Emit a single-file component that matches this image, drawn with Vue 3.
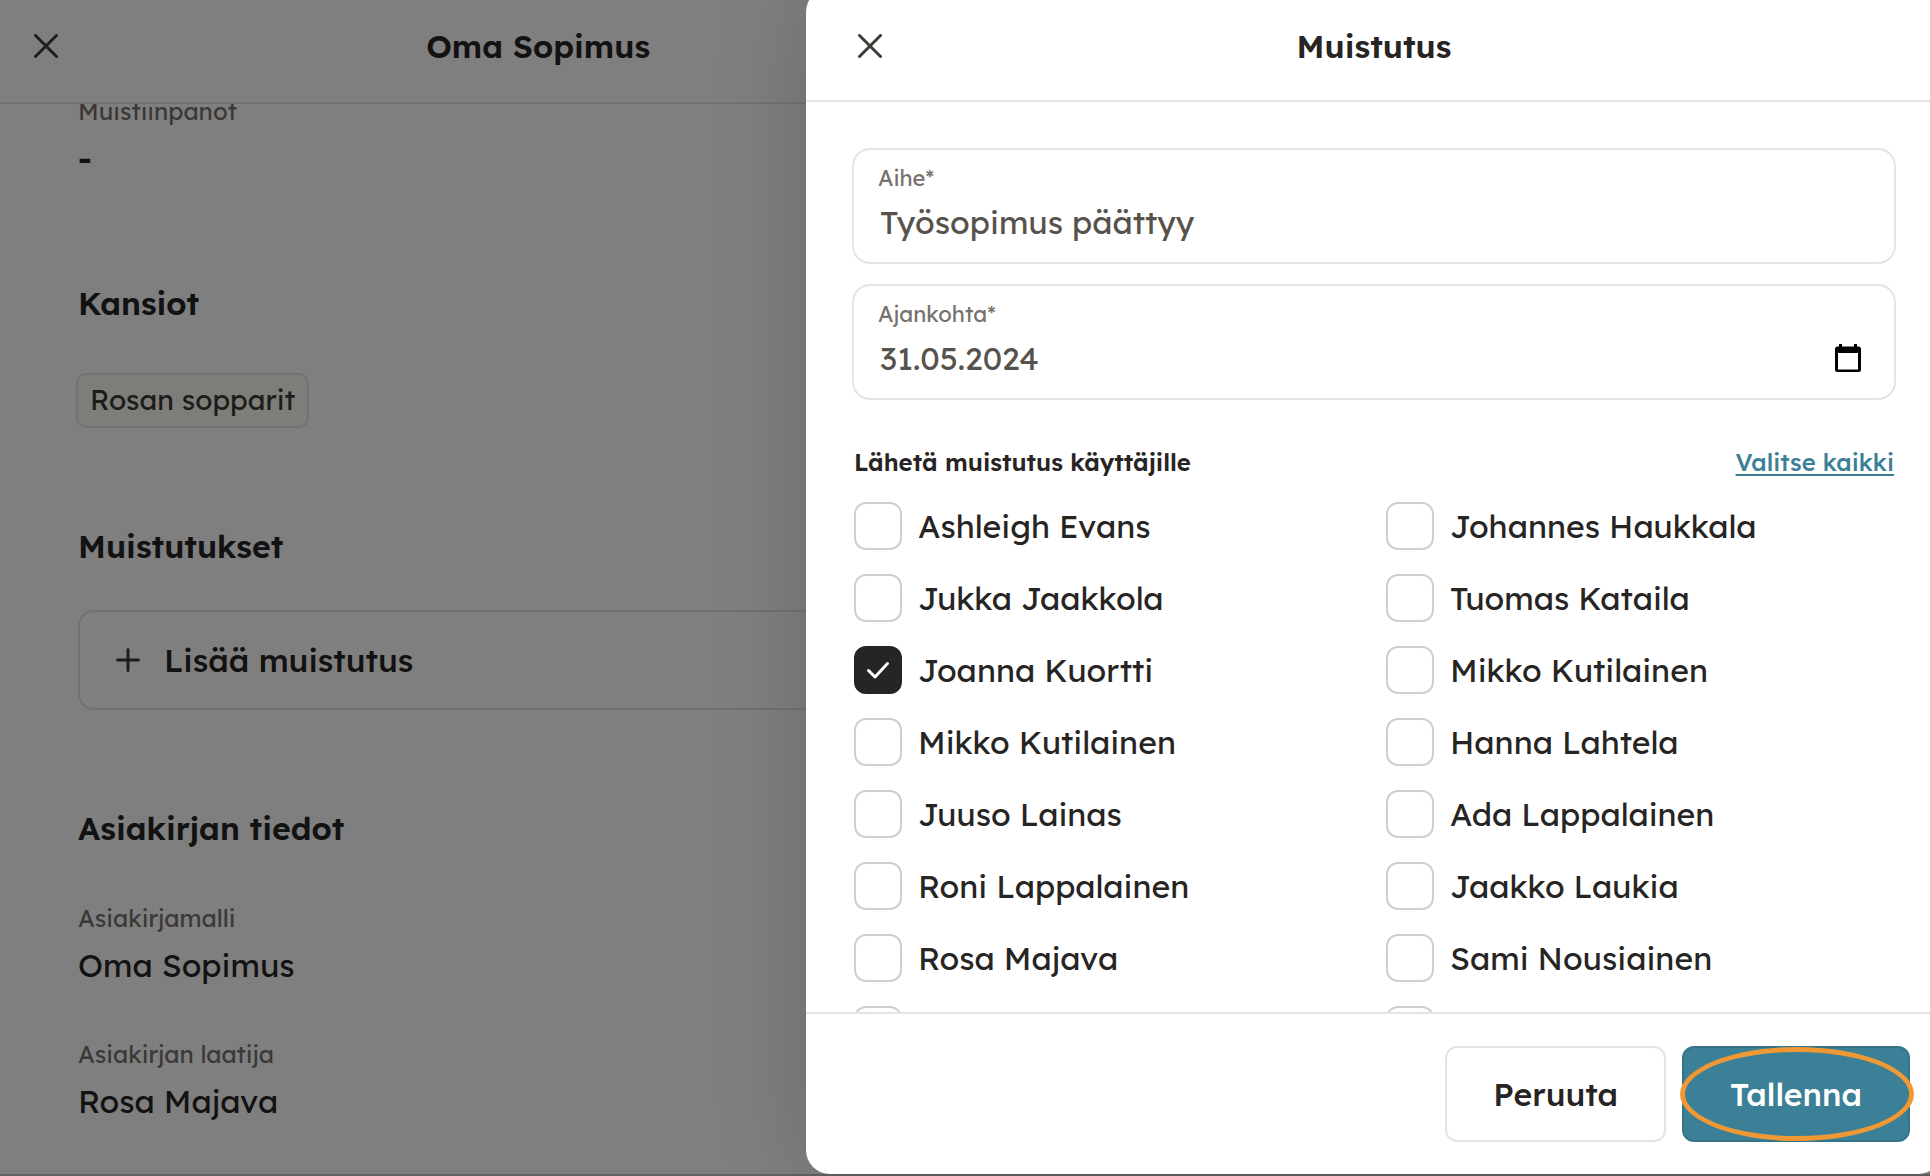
<script setup>
import { reactive } from 'vue';

const form = reactive({
  subject: 'Työsopimus päättyy',
  date: '31.05.2024',
});

const users = reactive([
  { name: 'Ashleigh Evans', checked: false },
  { name: 'Johannes Haukkala', checked: false },
  { name: 'Jukka Jaakkola', checked: false },
  { name: 'Tuomas Kataila', checked: false },
  { name: 'Joanna Kuortti', checked: true },
  { name: 'Mikko Kutilainen', checked: false },
  { name: 'Mikko Kutilainen', checked: false },
  { name: 'Hanna Lahtela', checked: false },
  { name: 'Juuso Lainas', checked: false },
  { name: 'Ada Lappalainen', checked: false },
  { name: 'Roni Lappalainen', checked: false },
  { name: 'Jaakko Laukia', checked: false },
  { name: 'Rosa Majava', checked: false },
  { name: 'Sami Nousiainen', checked: false },
  { name: '', checked: false },
  { name: '', checked: false },
]);

const details = [
  { label: 'Asiakirjamalli', value: 'Oma Sopimus' },
  { label: 'Asiakirjan laatija', value: 'Rosa Majava' },
];

function selectAll() {
  users.forEach((user) => (user.checked = true));
}
</script>

<template>
  <div class="page">
    <main class="document">
      <header class="bar document-bar">
        <button class="close" type="button" aria-label="Sulje">
          <svg viewBox="0 0 24 24" width="24" height="24"><path d="M1.5 1.5l21 21M22.5 1.5l-21 21" /></svg>
        </button>
        <h1 class="title">Oma Sopimus</h1>
      </header>

      <div class="document-scroll">
        <div class="document-body">
          <section>
            <div class="entry">
              <span class="entry-label">Muistiinpanot</span>
              <span class="entry-value empty">-</span>
            </div>
          </section>

          <section>
            <h2 class="heading">Kansiot</h2>
            <span class="tag">Rosan sopparit</span>
          </section>

          <section>
            <h2 class="heading">Muistutukset</h2>
            <button class="add" type="button">
              <svg viewBox="0 0 24 24" width="24" height="24"><path d="M12 1.5v21M1.5 12h21" /></svg>
              Lisää muistutus
            </button>
          </section>

          <section>
            <h2 class="heading">Asiakirjan tiedot</h2>
            <div v-for="item in details" :key="item.label" class="entry">
              <span class="entry-label">{{ item.label }}</span>
              <span class="entry-value">{{ item.value }}</span>
            </div>
          </section>
        </div>
      </div>
      <div class="document-edge"></div>
    </main>

    <div class="overlay"></div>

    <form class="drawer" @submit.prevent>
      <header class="bar drawer-bar">
        <button class="close" type="button" aria-label="Sulje">
          <svg viewBox="0 0 24 24" width="24" height="24"><path d="M1.5 1.5l21 21M22.5 1.5l-21 21" /></svg>
        </button>
        <h2 class="title">Muistutus</h2>
      </header>

      <div class="drawer-body">
        <div class="field">
          <label for="subject">Aihe*</label>
          <input id="subject" v-model="form.subject" type="text" />
        </div>
        <div class="field">
          <label for="date">Ajankohta*</label>
          <div class="field-row">
            <input id="date" v-model="form.date" class="date" type="text" />
            <button class="calendar" type="button" aria-label="Valitse päivä">
              <svg viewBox="0 0 26 28" width="26" height="28">
                <path
                  fill-rule="evenodd"
                  d="M4 0h3v2.5h12V0h3v2.5h1.5a2.5 2.5 0 0 1 2.5 2.5v20.500a2.5 2.5 0 0 1-2.500 2.500h-21a2.5 2.5 0 0 1-2.500-2.500V5a2.5 2.5 0 0 1 2.500-2.500H4zM3 9v16.500h20V9z"
                />
              </svg>
            </button>
          </div>
        </div>

        <div class="users-head">
          <h3>Lähetä muistutus käyttäjille</h3>
          <a href="#" @click.prevent="selectAll">Valitse kaikki</a>
        </div>

        <div class="users">
          <label v-for="(user, index) in users" :key="index" class="user">
            <span class="check">
              <input v-model="user.checked" type="checkbox" />
              <svg v-if="user.checked" viewBox="0 0 24 24" width="24" height="24"><path d="M2.500 12.500l6.500 6.500L21.500 5.500" /></svg>
            </span>
            {{ user.name }}
          </label>
        </div>
      </div>

      <footer class="actions">
        <button class="button" type="button">Peruuta</button>
        <button class="button primary" type="submit">
          Tallenna
          <span class="ring"></span>
        </button>
      </footer>
    </form>
  </div>
</template>

<style>
body {
  background: #c4c4c4;
}
</style>

<style scoped>
.page {
  position: relative;
  height: 100vh;
  overflow: hidden;
  box-sizing: border-box;
  background: #fff;
  color: #272424;
  font-family: Lexend, Inter, 'Noto Sans', sans-serif;
  font-size: 32px;
  line-height: 40px;
}
.page *,
.page *::before {
  box-sizing: border-box;
}
h1,
h2,
h3 {
  margin: 0;
  font-size: inherit;
  font-weight: 600;
}
button,
input {
  margin: 0;
  padding: 0;
  border: 0;
  background: none;
  color: inherit;
  font: inherit;
}
svg {
  display: block;
  fill: none;
  stroke: #3f3d38;
  stroke-width: 3;
  stroke-linecap: round;
  stroke-linejoin: round;
}

.bar {
  display: grid;
  grid-template-columns: 1fr auto 1fr;
  align-items: center;
  flex: none;
  border-bottom: 2px solid #e4e4e4;
}
.close {
  justify-self: start;
}

.document {
  display: flex;
  flex-direction: column;
  height: 100%;
}
.document-bar {
  height: 104px;
  padding: 0 46% 10px 34px;
}
.document-scroll {
  flex: 1;
  min-height: 0;
  overflow: hidden;
}
.document-body {
  display: flex;
  flex-direction: column;
  gap: 98px;
  margin-top: -9px;
  padding: 0 78px;
}
.document-edge {
  flex: none;
  height: 2px;
  background: #c4c4c4;
}
.heading {
  margin-bottom: 44px;
}
.entry {
  display: flex;
  flex-direction: column;
  gap: 11px;
  padding-bottom: 7px;
}
.heading + .entry {
  margin-top: 54px;
}
.entry + .entry {
  margin-top: 46px;
}
.entry-label {
  color: #77716d;
  font-size: 24px;
  line-height: 32px;
}
.empty {
  font-weight: 600;
}
.tag {
  display: inline-block;
  margin: 6px 0 0 -2px;
  padding: 5px 12px 6px;
  border: 2px solid #e4e4e0;
  border-radius: 10px;
  background: #fafaf5;
  color: #3b3935;
  font-size: 28px;
}
.add {
  display: flex;
  align-items: center;
  gap: 24px;
  width: 100%;
  height: 100px;
  padding: 0 36px;
  border: 2px solid #e4e4e4;
  border-radius: 16px;
  font-weight: 500;
}

.overlay {
  position: absolute;
  inset: 0;
  background: rgba(0, 0, 0, 0.5);
}

.drawer {
  position: absolute;
  top: -12px;
  right: -12px;
  bottom: 2px;
  left: 806px;
  display: flex;
  flex-direction: column;
  overflow: hidden;
  border-radius: 24px;
  background: #fff;
  box-shadow: 0 0 90px rgba(0, 0, 0, 0.17);
}
.drawer-bar {
  height: 114px;
  padding: 3px 52px 0;
}
.drawer-body {
  display: flex;
  flex: 1;
  flex-direction: column;
  min-height: 0;
  gap: 20px;
  padding: 46px 46px 0;
  overflow: hidden;
}
.field {
  display: flex;
  flex: none;
  flex-direction: column;
  gap: 10px;
  height: 116px;
  padding: 14px 24px 10px;
  border: 2px solid #e4e4e4;
  border-radius: 18px;
}
.field label {
  color: #77716d;
  font-size: 22px;
  line-height: 28px;
}
.field input {
  width: 100%;
  height: 40px;
  padding: 0 2px;
  color: #57534c;
  outline: none;
}
.field .date {
  font-variant-numeric: tabular-nums;
}
.field-row {
  display: flex;
  align-items: center;
}
.calendar {
  padding-right: 9px;
}
.calendar svg {
  fill: #000;
  stroke: none;
}

.users-head {
  display: flex;
  justify-content: space-between;
  flex: none;
  margin-top: 26px;
  padding: 0 2px;
  font-size: 24px;
  line-height: 32px;
}
.users-head a {
  color: #3b8096;
  font-weight: 500;
  text-underline-offset: 3px;
  text-decoration-thickness: 2px;
}
.users {
  display: grid;
  grid-template-columns: 1fr 1fr;
  gap: 24px;
  padding: 4px 2px 0;
}
.user {
  display: flex;
  align-items: center;
  gap: 16px;
  height: 48px;
}
.check {
  display: grid;
  place-items: center;
}
.check > * {
  grid-area: 1 / 1;
}
.check input {
  width: 48px;
  height: 48px;
  appearance: none;
  border: 2px solid #d0d0d0;
  border-radius: 12px;
}
.check input:checked {
  border-color: #272424;
  background: #272424;
}
.check svg {
  z-index: 1;
  stroke: #fff;
  pointer-events: none;
}

.actions {
  display: flex;
  justify-content: flex-end;
  flex: none;
  gap: 16px;
  padding: 32px;
  border-top: 2px solid #e4e4e4;
}
.button {
  position: relative;
  height: 96px;
  padding: 0 46px;
  border: 2px solid #e4e4e4;
  border-radius: 12px;
  font-weight: 500;
}
.primary {
  border-color: #347388;
  background: #3b8096;
  color: #fff;
}
/* highlight drawn over the save button */
.ring {
  position: absolute;
  inset: -1px -6px -1px -4px;
  border: 5px solid #ef9834;
  border-radius: 50%;
}
</style>
